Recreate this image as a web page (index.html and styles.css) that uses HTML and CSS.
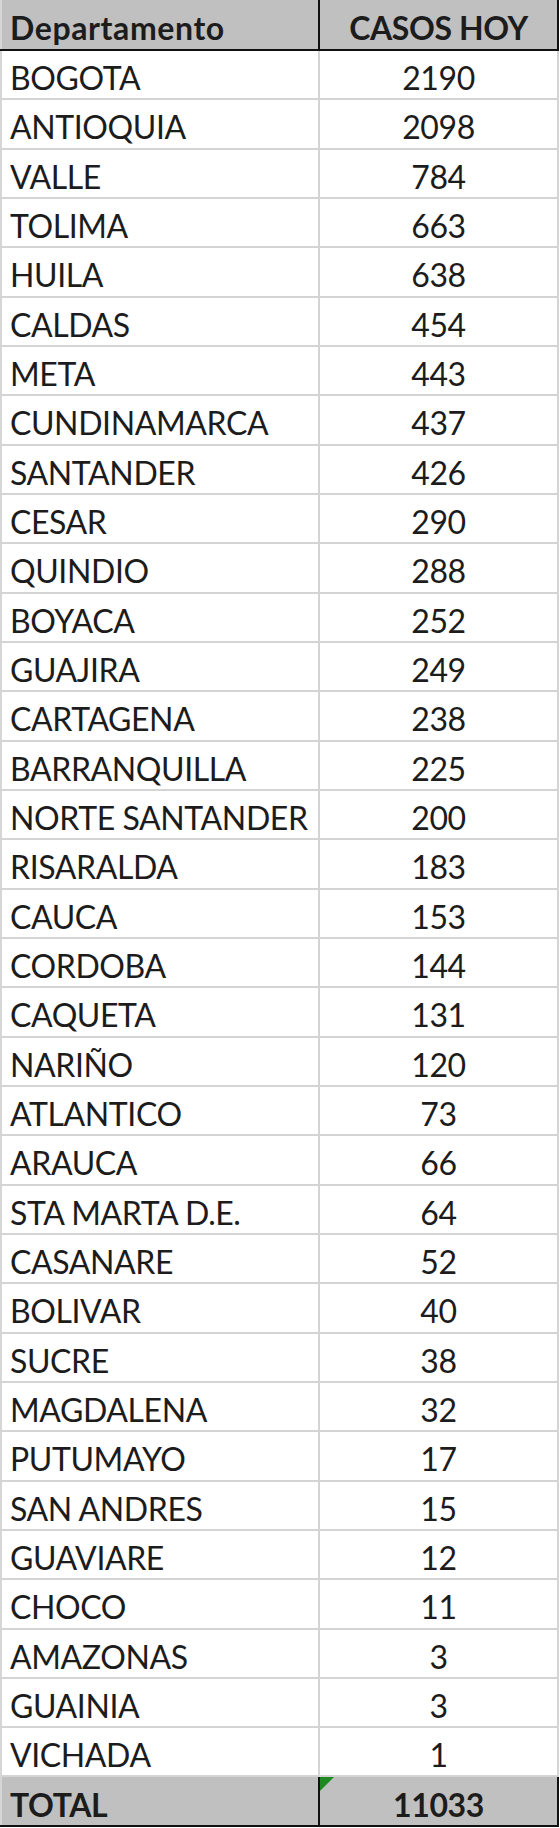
FILE: index.html
```html
<!DOCTYPE html>
<html lang="es">
<head>
<meta charset="utf-8">
<title>Casos hoy por departamento</title>
<link rel="stylesheet" href="styles.css">
</head>
<body>
<table class="sheet">
  <thead>
    <tr class="head"><th class="dep">Departamento</th><th class="num">CASOS HOY</th></tr>
  </thead>
  <tbody>
    <tr><td class="dep">BOGOTA</td><td class="num">2190</td></tr>
    <tr><td class="dep">ANTIOQUIA</td><td class="num">2098</td></tr>
    <tr><td class="dep">VALLE</td><td class="num">784</td></tr>
    <tr><td class="dep">TOLIMA</td><td class="num">663</td></tr>
    <tr><td class="dep">HUILA</td><td class="num">638</td></tr>
    <tr><td class="dep">CALDAS</td><td class="num">454</td></tr>
    <tr><td class="dep">META</td><td class="num">443</td></tr>
    <tr><td class="dep">CUNDINAMARCA</td><td class="num">437</td></tr>
    <tr><td class="dep">SANTANDER</td><td class="num">426</td></tr>
    <tr><td class="dep">CESAR</td><td class="num">290</td></tr>
    <tr><td class="dep">QUINDIO</td><td class="num">288</td></tr>
    <tr><td class="dep">BOYACA</td><td class="num">252</td></tr>
    <tr><td class="dep">GUAJIRA</td><td class="num">249</td></tr>
    <tr><td class="dep">CARTAGENA</td><td class="num">238</td></tr>
    <tr><td class="dep">BARRANQUILLA</td><td class="num">225</td></tr>
    <tr><td class="dep">NORTE SANTANDER</td><td class="num">200</td></tr>
    <tr><td class="dep">RISARALDA</td><td class="num">183</td></tr>
    <tr><td class="dep">CAUCA</td><td class="num">153</td></tr>
    <tr><td class="dep">CORDOBA</td><td class="num">144</td></tr>
    <tr><td class="dep">CAQUETA</td><td class="num">131</td></tr>
    <tr><td class="dep">NARIÑO</td><td class="num">120</td></tr>
    <tr><td class="dep">ATLANTICO</td><td class="num">73</td></tr>
    <tr><td class="dep">ARAUCA</td><td class="num">66</td></tr>
    <tr><td class="dep">STA MARTA D.E.</td><td class="num">64</td></tr>
    <tr><td class="dep">CASANARE</td><td class="num">52</td></tr>
    <tr><td class="dep">BOLIVAR</td><td class="num">40</td></tr>
    <tr><td class="dep">SUCRE</td><td class="num">38</td></tr>
    <tr><td class="dep">MAGDALENA</td><td class="num">32</td></tr>
    <tr><td class="dep">PUTUMAYO</td><td class="num">17</td></tr>
    <tr><td class="dep">SAN ANDRES</td><td class="num">15</td></tr>
    <tr><td class="dep">GUAVIARE</td><td class="num">12</td></tr>
    <tr><td class="dep">CHOCO</td><td class="num">11</td></tr>
    <tr><td class="dep">AMAZONAS</td><td class="num">3</td></tr>
    <tr><td class="dep">GUAINIA</td><td class="num">3</td></tr>
    <tr><td class="dep">VICHADA</td><td class="num">1</td></tr>
  </tbody>
  <tfoot>
    <tr class="total"><td class="dep">TOTAL</td><td class="num flag">11033</td></tr>
  </tfoot>
</table>
</body>
</html>
```
FILE: styles.css
```css
html, body {
  margin: 0;
  padding: 0;
  background: #ffffff;
}
body {
  width: 560px;
  height: 1828px;
  overflow: hidden;
}
.sheet {
  border-collapse: collapse;
  table-layout: fixed;
  width: 559px;
  font-family: Lato, "Liberation Sans", sans-serif;
  font-size: 32px;
  letter-spacing: -0.4px;
  color: #1c1c1c;
  border-left: 2px solid #d6d6d6;
}
.sheet td, .sheet th {
  height: 49.34px;
  padding: 7px 0 0 0;
  box-sizing: border-box;
  line-height: 38px;
  vertical-align: middle;
  border: 2px solid #d4d4d4;
  border-left: none;
  white-space: nowrap;
}
.sheet .dep {
  width: 318px;
  text-align: left;
  padding-left: 8px;
}
.sheet .num {
  text-align: center;
}
.head th {
  height: 50px;
  background: #c0c0c0;
  font-weight: bold;
  border-top: none;
  border-bottom: 2px solid #111;
  border-right: 2px solid #111;
}
.head th.dep {
  letter-spacing: 0.6px;
}
.total td {
  background: #c0c0c0;
  font-weight: bold;
  border-top: 2px solid #111;
  border-bottom: 2px solid #111;
  border-right: 2px solid #111;
}
.flag {
  position: relative;
}
.flag::before {
  content: "";
  position: absolute;
  left: 0;
  top: 0;
  border-top: 14px solid #1f8a1f;
  border-right: 14px solid transparent;
}
```
